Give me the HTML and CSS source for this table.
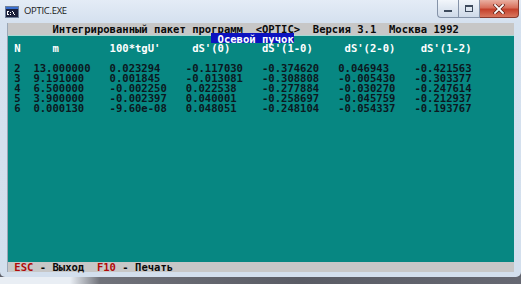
FILE: index.html
```html
<!DOCTYPE html>
<html>
<head>
<meta charset="utf-8">
<link rel="stylesheet" href="styles.css">
</head>
<body>
<div class="win">
  <div class="titlebar">
    <svg class="appicon" width="14" height="12" viewBox="0 0 14 12">
      <rect x="0.5" y="0.5" width="13" height="11" fill="#1a1f3a" stroke="#6d7f99"/>
      <rect x="1" y="1" width="12" height="2" fill="#3a6fd0"/>
      <rect x="2" y="5" width="2" height="1" fill="#fff"/>
      <rect x="2" y="6" width="1" height="2" fill="#fff"/>
      <rect x="2" y="8" width="2" height="1" fill="#fff"/>
      <rect x="5" y="6" width="1" height="1" fill="#fff"/>
      <rect x="5" y="8" width="1" height="1" fill="#fff"/>
      <rect x="7" y="5" width="1" height="1" fill="#fff"/>
      <rect x="8" y="6" width="1" height="2" fill="#fff"/>
      <rect x="9" y="8" width="1" height="1" fill="#fff"/>
    </svg>
    <span class="title">OPTIC.EXE</span>
    <div class="btns">
      <div class="btn min">
        <svg width="10" height="8" viewBox="0 0 10 8"><rect x="1" y="5" width="8" height="2" fill="#3d4a5c"/></svg>
      </div>
      <div class="btn max">
        <svg width="10" height="8" viewBox="0 0 10 8"><rect x="1.5" y="0.5" width="7" height="6" fill="none" stroke="#3d4a5c"/><rect x="1" y="0" width="8" height="2" fill="#3d4a5c"/></svg>
      </div>
      <div class="btn close">
        <svg width="12" height="10" viewBox="0 0 12 10"><path d="M2 1 L10 9 M10 1 L2 9" stroke="#5a1d14" stroke-width="3.2" stroke-linecap="square"/><path d="M2 1 L10 9 M10 1 L2 9" stroke="#ffffff" stroke-width="1.8" stroke-linecap="square"/></svg>
      </div>
    </div>
  </div>
  <div class="mid">
    <div class="client">
<pre class="hdr">       Интегрированный пакет программ  &lt;OPTIC&gt;  Версия 3.1  Москва 1992</pre>
      <div class="sep"></div>
<pre class="teal"><span class="lbl"> N     m        100*tgU'     dS'(0)     dS'(1-0)     dS'(2-0)    dS'(1-2)</span>

 2  13.000000   0.023294    -0.117030   -0.374620   0.046943    -0.421563
 3  9.191000    0.001845    -0.013081   -0.308808   -0.005430   -0.303377
 4  6.500000    -0.002250   0.022538    -0.277884   -0.030270   -0.247614
 5  3.900000    -0.002397   0.040001    -0.258697   -0.045759   -0.212937
 6  0.000130    -9.60e-08   0.048051    -0.248104   -0.054337   -0.193767</pre>
<pre class="foot"> <span class="key">ESC</span> - Выход  <span class="key">F10</span> - Печать</pre>
<pre class="caption"> Осевой пучок</pre>
    </div>
  </div>
</div>
<div class="desk"></div>
</body>
</html>
```
FILE: styles.css
```css
* { box-sizing: border-box; margin: 0; padding: 0; }
html, body { width: 521px; height: 284px; overflow: hidden; }
body { background: #5e6069; }

.win {
  width: 521px;
  height: 277px;
  display: flex;
  flex-direction: column;
  background: linear-gradient(#e4ecf6, #d5e1ef 22px, #d3dfed);
  border-radius: 0 0 5px 5px;
}

.titlebar {
  height: 23px;
  display: flex;
  align-items: flex-start;
  padding-left: 5px;
}
.appicon { margin-top: 6px; flex: none; }
.title {
  margin: 5px 0 0 5px;
  font: 9.5px/12px "Open Sans", sans-serif;
  letter-spacing: -0.3px;
  color: #1b1b1b;
}
.btns {
  margin-left: auto;
  margin-right: 2px;
  display: flex;
  height: 18px;
}
.btn {
  height: 18px;
  display: flex;
  align-items: center;
  justify-content: center;
  border: 1px solid #8593a8;
  border-top: none;
}
.min {
  width: 21px;
  border-right: none;
  border-radius: 0 0 0 4px;
  background: linear-gradient(#f2f6fb, #dfe7f1 50%, #cfdae8);
}
.max {
  width: 22px;
  background: linear-gradient(#f2f6fb, #dfe7f1 50%, #cfdae8);
}
.close {
  width: 39px;
  border-left: none;
  border-color: #8a3a2e;
  border-radius: 0 0 4px 0;
  background: linear-gradient(#eab0a2, #d8705c 45%, #c5412c 55%, #d9775f);
}

.mid {
  flex: none;
  display: flex;
  padding: 0 7px;
}
.client {
  position: relative;
  width: 507px;
  height: 249px;
  display: flex;
  flex-direction: column;
  font: bold 10.55px/10px "DejaVu Sans Mono", monospace;
  border-left: 1px solid #9aa6b5;
}
.client pre { font: inherit; white-space: pre; }

.hdr {
  height: 12px;
  padding-top: 1px;
  line-height: 9px;
  background: #c7c7c7;
  color: #0b0b0b;
}
.sep { height: 1px; background: #a7d9d4; }
.teal {
  flex: 1;
  padding-top: 7px;
  background: #078782;
  color: #0c1820;
}
.lbl { color: #ffffff; }
.foot {
  height: 10px;
  background: #c7c7c7;
  color: #0b0b0b;
}
.key { color: #b00a0a; }

.caption {
  position: absolute;
  top: 10px;
  left: 32ch;
  width: 13ch;
  height: 10px;
  padding-top: 1px;
  line-height: 9px;
  background: #0d12c0;
  color: #ffffff;
}

.desk {
  height: 7px;
  background: linear-gradient(to right, #e9eef4 0, #e9eef4 70px, #70727a 100px, #5a5c65 300px, #666872 521px);
}
```
